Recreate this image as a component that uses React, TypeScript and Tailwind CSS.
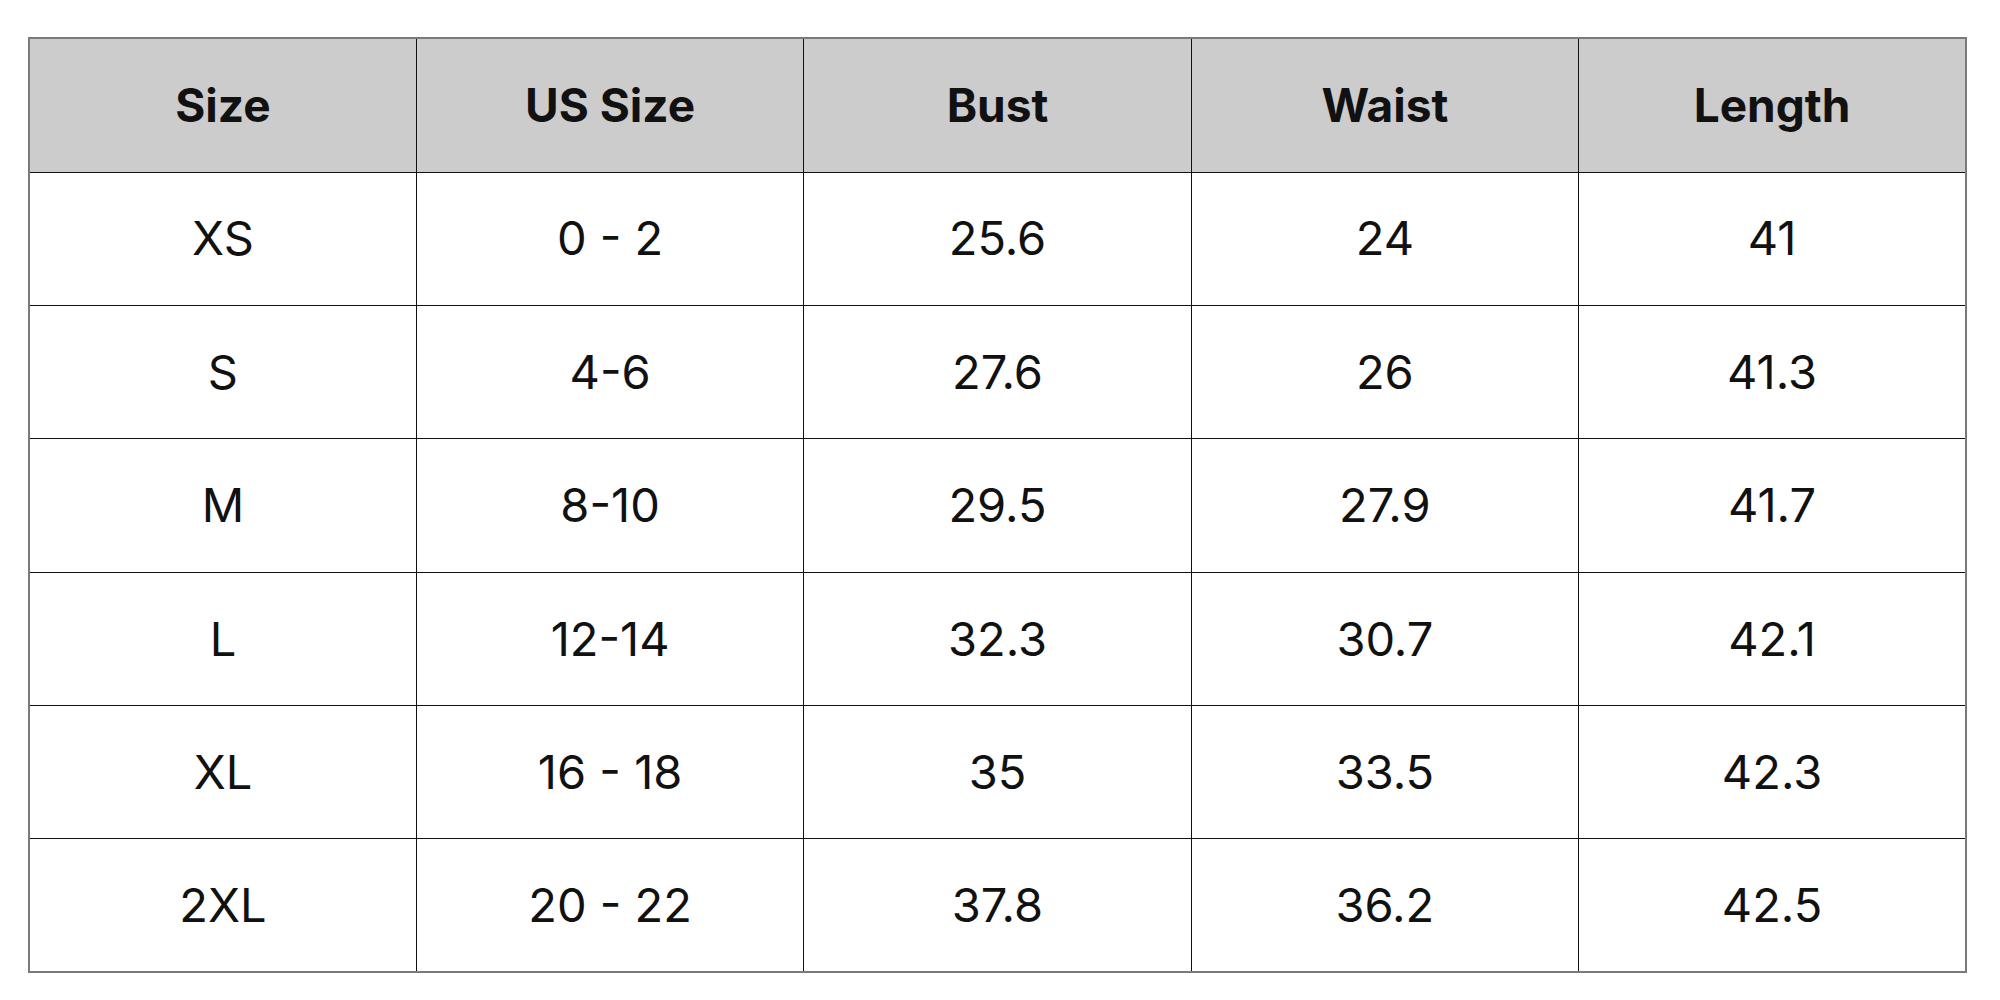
const headers = ["Size", "US Size", "Bust", "Waist", "Length"];

const rows = [
  ["XS", "0 - 2", "25.6", "24", "41"],
  ["S", "4-6", "27.6", "26", "41.3"],
  ["M", "8-10", "29.5", "27.9", "41.7"],
  ["L", "12-14", "32.3", "30.7", "42.1"],
  ["XL", "16 - 18", "35", "33.5", "42.3"],
  ["2XL", "20 - 22", "37.8", "36.2", "42.5"],
];

export default function App() {
  return (
    <main className="w-[2000px] h-[1000px] bg-white pl-[28px] pt-[37px] font-['Inter','Liberation_Sans',sans-serif] text-[#111]">
      <table className="w-[1939px] table-fixed border-collapse border-2 border-[#7a7a7a]">
        <thead>
          <tr className="h-[134px] bg-[#cccccc]">
            {headers.map((h) => (
              <th key={h} className="border border-[#111] text-[46px] font-bold text-center align-middle">
                {h}
              </th>
            ))}
          </tr>
        </thead>
        <tbody>
          {rows.map((r) => (
            <tr key={r[0]} className="h-[133.4px]">
              {r.map((v, i) => (
                <td key={i} className="border border-[#111] text-[47px] font-normal text-center align-middle">
                  {v}
                </td>
              ))}
            </tr>
          ))}
        </tbody>
      </table>
    </main>
  );
}
